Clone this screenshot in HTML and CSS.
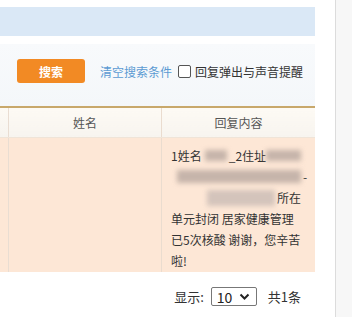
FILE: index.html
```html
<!DOCTYPE html>
<html>
<head>
<meta charset="utf-8">
<link rel="stylesheet" href="styles.css">
</head>
<body>
<div class="page">
  <div class="main">
    <div class="band"></div>
    <div class="search">
      <button class="btn">搜索</button>
      <a class="clear">清空搜索条件</a>
      <label class="remind"><span class="cb"></span>回复弹出与声音提醒</label>
    </div>
    <table class="grid">
      <thead>
        <tr><th class="c0"></th><th class="c1">姓名</th><th class="c2">回复内容</th></tr>
      </thead>
      <tbody>
        <tr>
          <td class="c0"></td>
          <td class="c1"></td>
          <td class="c2">
            <div class="reply">
              <div class="ln">1姓名<span class="blur b1"></span>_2住址 <span class="blur b2"></span></div>
              <div class="ln"><span class="blur b3"></span><span class="dash">-</span></div>
              <div class="ln right"><span class="blur b4"></span>所在</div>
              <div class="ln">单元封闭 居家健康管理</div>
              <div class="ln">已5次核酸 谢谢，您辛苦</div>
              <div class="ln">啦!</div>
            </div>
          </td>
        </tr>
      </tbody>
    </table>
    <div class="pager">
      <span>显示:</span>
      <span class="sel">10<svg width="11" height="8" viewBox="0 0 11 8"><path d="M1.5 1.5 L5.5 5.5 L9.5 1.5" fill="none" stroke="#222" stroke-width="2"/></svg></span>
      <span>共1条</span>
    </div>
  </div>
  <div class="gutter"></div>
  <div class="side"></div>
</div>
</body>
</html>
```
FILE: styles.css
```css
html, body { margin: 0; padding: 0; background: #fff; }
body { font-family: "Microsoft YaHei", "Noto Sans CJK SC", "Liberation Sans", sans-serif; font-size: 12px; color: #333; }
.page { display: flex; height: 317px; overflow: hidden; }
.main { width: 315px; padding-top: 7px; }
.gutter { width: 20px; }
.side { flex: 1; border-left: 1px solid #dcdcdc; background: #f7f7f7; }
.band { height: 29px; background: #dae8f6; }
.search { margin-top: 8px; height: 62px; background: linear-gradient(#f8fafc, #f4f7fa); display: flex; align-items: center; padding-left: 17px; padding-bottom: 8px; box-sizing: border-box; }
.btn { width: 68px; height: 24px; border: 0; border-radius: 3px; background: #f28a24; color: #fff; font-family: inherit; font-size: 12px; font-weight: bold; padding: 0; }
.clear { margin-left: 15px; color: #5c9bd3; }
.remind { display: flex; align-items: center; margin-left: 6px; color: #333; }
.cb { width: 11px; height: 11px; border: 1px solid #555; border-radius: 2px; background: #fff; margin-right: 4px; }
.grid { width: 315px; border-collapse: collapse; border-top: 2px solid #c8a86b; table-layout: fixed; }
.grid th { height: 29px; background: linear-gradient(#fdfaf4, #f7f4ef); font-weight: normal; color: #555; padding: 0; border-bottom: 1px solid #efe4d8; }
.grid td { background: #fde7d6; vertical-align: top; padding: 0; height: 134px; }
.grid .c0 { width: 8px; border-right: 1px solid #e9ddd2; }
.grid .c1 { width: 152px; border-right: 1px solid #eadccf; }
.reply { padding: 7px 0 0 9px; line-height: 21px; }
.ln { height: 21px; white-space: nowrap; display: flex; align-items: center; }
.blur { display: inline-block; background: #c6b4aa; filter: blur(2.5px); height: 11px; }
.b1 { width: 22px; margin: 0 2px 0 3px; }
.b2 { width: 35px; }
.b3 { width: 124px; height: 13px; margin-left: 6px; }
.dash { margin-left: 2px; }
.right { padding-left: 36px; }
.b4 { width: 68px; height: 16px; margin-right: 2px; background: #d4c4bb; }
.pager { display: flex; align-items: center; justify-content: flex-end; padding-right: 14px; margin-top: 15px; gap: 7px; font-size: 13px; }
.sel { display: flex; align-items: center; justify-content: space-between; border: 1px solid #777; border-radius: 2px; padding: 0 6px 0 5px; box-sizing: border-box; width: 46px; height: 19px; font-size: 14px; color: #222; margin-right: 4px; }
```
